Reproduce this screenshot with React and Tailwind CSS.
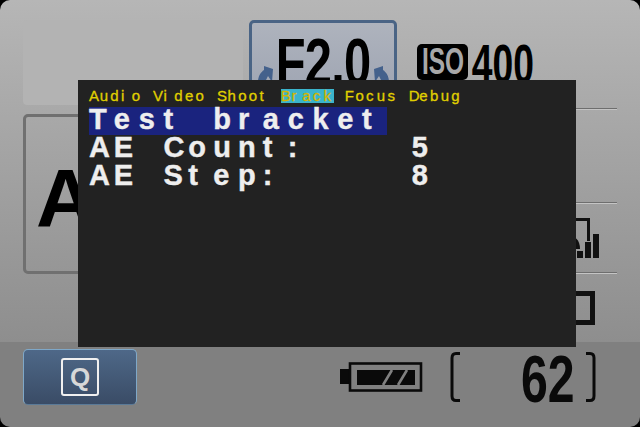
const MENU = 'Audio Video Shoot Brack Focus Debug';
const BRACK_START = 18;
const BRACK_END = 23;

function SmallCell({ c, active }) {
  return (
    <span className={`inline-block h-[14px] w-[10.66px] shrink-0 whitespace-pre [-webkit-text-stroke:0.3px_currentColor] ${active ? 'bg-[#3ab4cc] text-[#d4b400]' : ''}`}>{c}</span>
  );
}

function BigRow({ text, selected }) {
  return (
    <div className={`flex h-[28px] text-[29px] leading-[24px] font-bold text-[#eeeeee] ${selected ? 'bg-[#1a237e]' : ''}`}>
      {text.split('').map((c, i) => (
        <span key={i} className="inline-block w-[24.84px] shrink-0 whitespace-pre [-webkit-text-stroke:0.4px_#eeeeee]">{c}</span>
      ))}
    </div>
  );
}

function Divider() {
  return <div className="h-[2px] w-full border-t border-[#6e6e6e] bg-[#c4c4c4]" />;
}

function FArrow({ flip }) {
  return (
    <svg width="16" height="16" viewBox="0 0 16 16" className={flip ? '-scale-x-100' : ''}>
      <path d="M0 16 C0 10 3 6 6 4 L6 0 L15 3 L14 16 L10 10 L7 16 Z" fill="#44618c" />
    </svg>
  );
}

export default function App() {
  return (
    <div className="relative h-[427px] w-[640px] overflow-hidden bg-black font-['Liberation_Sans',Arial,sans-serif]">
      <div className="flex h-full flex-col overflow-hidden rounded-[10px]">
        {/* main info area */}
        <div className="flex h-[342px] bg-gradient-to-b from-[#b6b6b6] to-[#8e8e8e] pl-[23px] pt-[20px]">
          <div className="flex w-[220px] flex-col gap-[9px]">
            <div className="h-[85px] rounded-[4px] bg-[#b3b3b3]" />
            <div className="flex h-[160px] w-[220px] items-center overflow-hidden rounded-[5px] border-[3px] border-[#707070] pl-[10px] pt-[8px]">
              <span className="text-[82px] leading-none font-bold text-black">A</span>
            </div>
          </div>

          <div className="ml-[6px] flex w-[368px] flex-col">
            <div className="flex h-[88px] items-start">
              <div className="relative flex h-[88px] w-[148px] justify-center overflow-hidden rounded-[5px] border-[3px] border-[#4a6485] bg-gradient-to-b from-[#aeb3bd] to-[#9da3b1]">
                <span className="mt-[6px] origin-top scale-x-[0.74] text-[66px] leading-[66px] font-bold tracking-[-1px] text-black">F2.0</span>
                <div className="absolute left-[6px] top-[43px]"><FArrow /></div>
                <div className="absolute right-[5px] top-[43px]"><FArrow flip /></div>
              </div>
              <div className="ml-[20px] mt-[24px] flex h-[36px] w-[51px] items-center justify-center rounded-[5px] bg-black">
                <span className="scale-x-[0.68] text-[36px] leading-none font-bold text-[#a8a8a8]">ISO</span>
              </div>
              <span className="mt-[16px] ml-[-8px] w-[70px] scale-x-[0.665] text-center text-[56px] leading-[56px] font-bold text-black">400</span>
            </div>

            <div className="ml-[148px] w-[220px]">
              <Divider />
              <div className="relative h-[92px]" />
              <Divider />
              <div className="relative flex h-[68px] justify-end pr-[17px]">
                <svg width="34" height="48" viewBox="0 0 34 48" className="mt-[11px]">
                  <path d="M0 4.5 H22.5 V26" fill="none" stroke="#111" strokeWidth="3" />
                  <path d="M0 20 C9 20 14 25 14 34 H0 Z" fill="#111" />
                  <rect x="11" y="36" width="6" height="7" fill="#111" />
                  <rect x="19" y="27" width="6" height="16" fill="#111" />
                  <rect x="27" y="19" width="6" height="24" fill="#111" />
                </svg>
              </div>
              <Divider />
              <div className="flex justify-end pr-[22px] pt-[17px]">
                <div className="h-[34px] w-[40px] border-[5px] border-[#111]" />
              </div>
            </div>
          </div>
        </div>

        {/* bottom bar */}
        <div className="flex h-[85px] items-start bg-[#808080] pl-[23px] pt-[7px]">
          <div className="flex h-[56px] w-[114px] items-center justify-center rounded-[5px] border border-[#7fa8c8] border-b-[#5a7a98] bg-gradient-to-b from-[#4e6888] to-[#3a4c66]">
            <div className="flex h-[38px] w-[38px] items-center justify-center rounded-[3px] border-2 border-[#f0f0f0]">
              <span className="text-[26px] leading-none font-bold text-[#d8d8d8]">Q</span>
            </div>
          </div>

          <svg width="84" height="30" viewBox="0 0 84 30" className="ml-[203px] mt-[13px]">
            <rect x="0" y="7" width="10" height="15" fill="#0a0a0a" />
            <rect x="10" y="1.5" width="71" height="27" fill="none" stroke="#0a0a0a" strokeWidth="2.6" />
            <rect x="17" y="8" width="58" height="15" fill="#0a0a0a" />
            <path d="M43 23 L52 8 M58 23 L67 8" stroke="#808080" strokeWidth="2.6" />
          </svg>

          <svg width="14" height="50" viewBox="0 0 14 50" className="ml-[25px] mt-[3px]">
            <path d="M11 1.5 H7 Q3 1.5 3 6 V44 Q3 48.5 7 48.5 H11" fill="none" stroke="#0a0a0a" strokeWidth="3" />
          </svg>

          <span className="ml-[58px] mt-[-3px] w-[56px] origin-left scale-x-[0.73] text-[66px] leading-[66px] font-bold text-[#0a0a0a]">62</span>

          <svg width="14" height="50" viewBox="0 0 14 50" className="ml-[6px] mt-[3px]">
            <path d="M3 1.5 H7 Q11 1.5 11 6 V44 Q11 48.5 7 48.5 H3" fill="none" stroke="#0a0a0a" strokeWidth="3" />
          </svg>
        </div>
      </div>

      {/* bracket menu overlay */}
      <div className="absolute left-[78px] top-[80px] h-[267px] w-[498px] bg-[#222222] pl-[11px] pt-[9px]">
        <div className="flex h-[14px] text-[15px] leading-[13px] text-[#e0d000]">
          {MENU.split('').map((c, i) => (
            <SmallCell key={i} c={c} active={i >= BRACK_START && i < BRACK_END} />
          ))}
        </div>
        <div className="mt-[4px] w-[298px]">
          <BigRow text="Test bracket" selected />
        </div>
        <BigRow text="AE Count:    5" />
        <BigRow text="AE Step:     8" />
      </div>
    </div>
  );
}
